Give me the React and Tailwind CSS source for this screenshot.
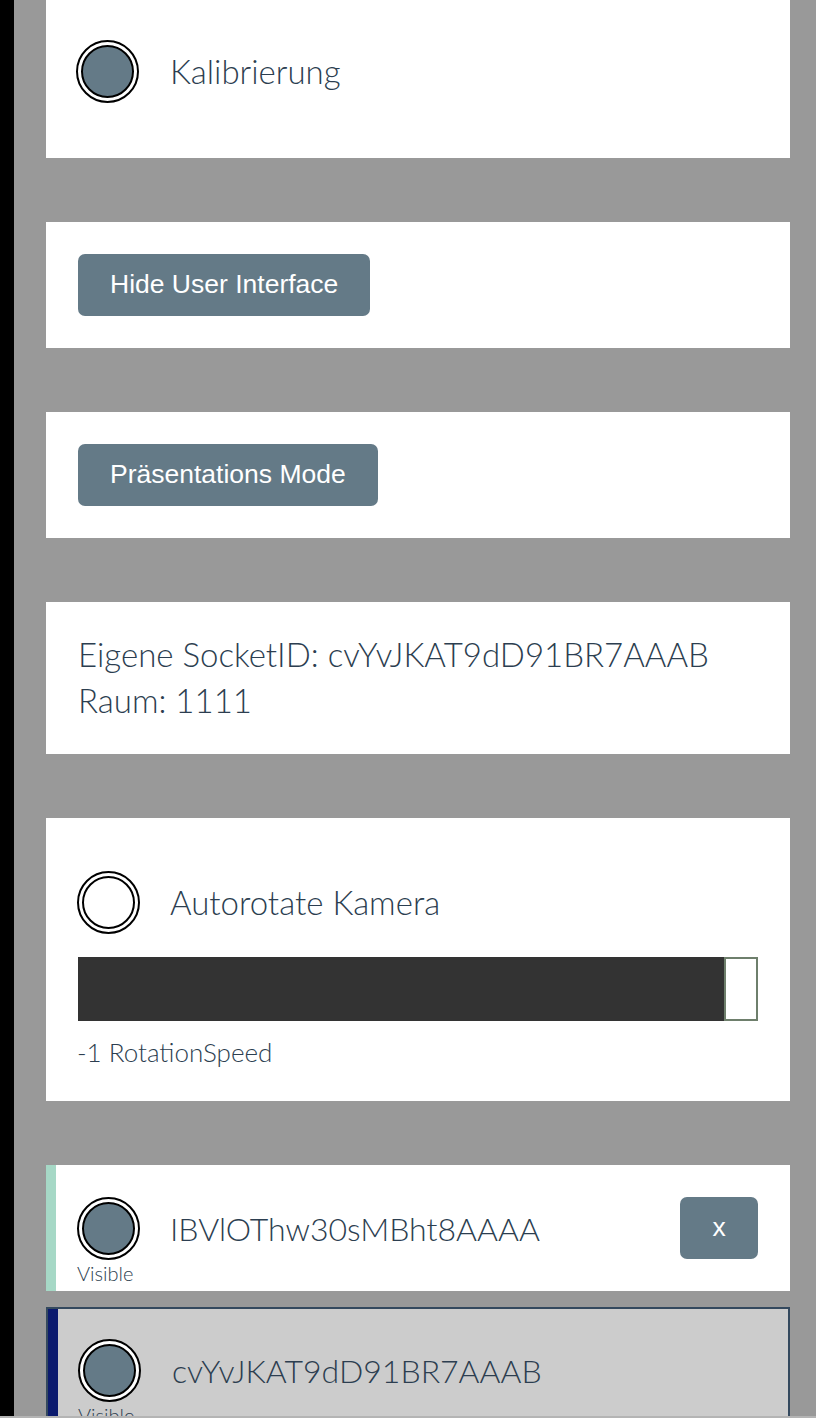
import React from "react";

const font = { fontFamily: "Lato, 'Noto Sans', sans-serif" };

function Radio({ checked = true }) {
  return (
    <div className="w-[63px] h-[63px] rounded-full border-2 border-black bg-white flex items-center justify-center shrink-0">
      <div
        className={
          "w-[53px] h-[53px] rounded-full border-2 border-black " +
          (checked ? "bg-[#647a87]" : "bg-white")
        }
      />
    </div>
  );
}

function Button({ children, className = "" }) {
  return (
    <button
      className={
        "h-[62px] rounded-[7px] bg-[#647a87] text-white text-[26.5px] font-normal font-['Liberation_Sans',Arial,sans-serif] " +
        className
      }
    >
      {children}
    </button>
  );
}

export default function App() {
  return (
    <div className="h-[1418px] w-[816px] flex flex-col overflow-hidden text-[#2c3e50] font-light" style={font}>
      <div className="flex-1 min-h-0 flex overflow-hidden">
        <div className="w-[14px] bg-black shrink-0" />
        <div className="flex-1 bg-[#999999] pl-[32px] pr-[26px] flex flex-col">
          {/* Kalibrierung */}
          <div className="bg-white pl-[30px] pr-[32px] pt-[18px] pb-[33px]">
            <div className="flex items-center gap-[31px] py-[22px]">
              <Radio />
              <span className="text-[33px] leading-none">Kalibrierung</span>
            </div>
          </div>

          <div className="h-[64px] shrink-0" />
          <div className="bg-white p-[32px]">
            <Button className="px-[32px]">Hide User Interface</Button>
          </div>

          <div className="h-[64px] shrink-0" />
          <div className="bg-white p-[32px]">
            <Button className="px-[32px]">Präsentations Mode</Button>
          </div>

          <div className="h-[64px] shrink-0" />
          <div className="bg-white p-[32px] text-[33px] leading-[44px]">
            <div className="-mt-[2px] mb-[2px]">Eigene SocketID: cvYvJKAT9dD91BR7AAAB</div>
            <div>Raum: 1111</div>
          </div>

          <div className="h-[64px] shrink-0" />
          <div className="bg-white pl-[31px] pr-[32px] py-[32px]">
            <div className="flex items-center gap-[30px] pt-[21px] pb-[23px]">
              <Radio checked={false} />
              <span className="text-[33px] leading-none">Autorotate Kamera</span>
            </div>
            <div className="flex h-[64px] ml-[1px]">
              <div className="flex-1 bg-[#333333]" />
              <div className="w-[34px] bg-white border-2 border-[#6e7f6c]" />
            </div>
            <div className="mt-[14px] text-[26px] leading-[34px]">-1 RotationSpeed</div>
          </div>

          <div className="h-[64px] shrink-0" />
          <div className="bg-white border-l-[10px] border-[#a6d8c6] pl-[21px] pr-[32px] pt-[32px] pb-[4px] flex items-start">
            <div className="flex flex-col items-start">
              <Radio />
              <span className="text-[20px] leading-[27px]">Visible</span>
            </div>
            <div className="h-[63px] flex items-center ml-[30px] text-[32px]">IBVlOThw30sMBht8AAAA</div>
            <Button className="ml-auto w-[78px]">x</Button>
          </div>

          <div className="h-[16px] shrink-0" />
          <div className="bg-[#cccccc] border-2 border-[#34495e] shrink-0">
            <div className="border-l-[10px] border-[#0b1a6e] pl-[20px] pr-[32px] pt-[30px] pb-[4px] flex items-start">
              <div className="flex flex-col items-start">
                <Radio />
                <span className="text-[20px] leading-[27px]">Visible</span>
              </div>
              <div className="h-[63px] flex items-center ml-[31px] text-[32px]">cvYvJKAT9dD91BR7AAAB</div>
            </div>
          </div>
        </div>
      </div>
      <div className="h-[2px] bg-[#b4b4b4] shrink-0" />
    </div>
  );
}
